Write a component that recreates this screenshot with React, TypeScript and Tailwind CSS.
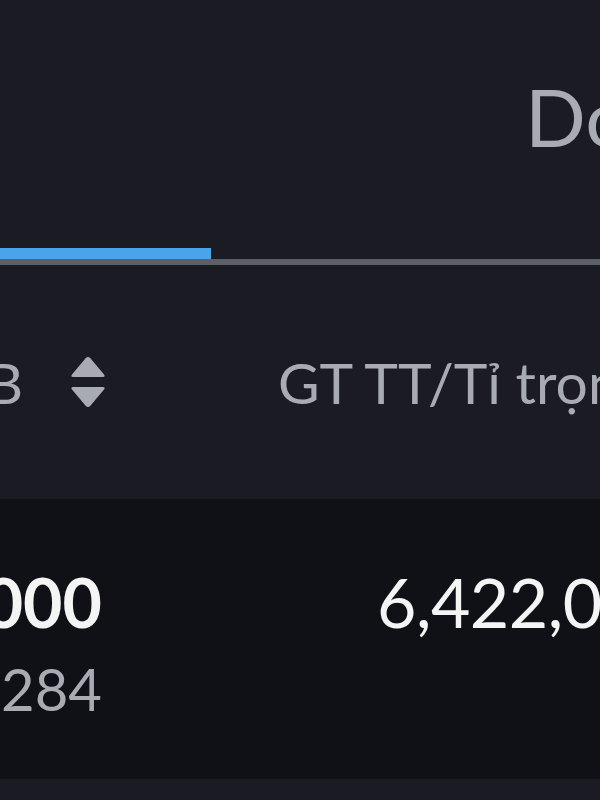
function SortIcon() {
  return (
    <svg width="36" height="52" viewBox="0 0 36 52" fill="#a9abb3">
      <path d="M15.6 2.2 Q18 -0.4 20.4 2.2 L34 18.6 Q35.6 21 33 21 L3 21 Q0.4 21 2 18.6 Z" />
      <path d="M15.6 49.8 Q18 52.4 20.4 49.8 L34 33.4 Q35.6 31 33 31 L3 31 Q0.4 31 2 33.4 Z" />
    </svg>
  );
}

export default function App() {
  return (
    <div className="flex h-[800px] w-[600px] flex-col overflow-hidden bg-[#1b1c23] font-['Lato',sans-serif]">
      {/* Tabs */}
      <div className="flex h-[248px] shrink-0 items-start pl-[525px] pt-[68px]">
        <span className="shrink-0 whitespace-nowrap text-[80px] leading-[96px] text-[#a9abb3]">Doanh nghiệp</span>
      </div>
      <div className="h-[11px] w-[211px] shrink-0 bg-[#4aa3eb]" />
      <div className="h-[6px] w-full shrink-0 bg-[#5c5f67]" />

      {/* Table header */}
      <div className="flex h-[234px] shrink-0 items-center">
        <div className="flex w-[23px] shrink-0 justify-end overflow-hidden">
          <span className="shrink-0 whitespace-nowrap text-[57px] leading-none text-[#a9abb3]">KL/Giá TB</span>
        </div>
        <div className="ml-[47px] flex shrink-0">
          <SortIcon />
        </div>
        <span className="ml-[172px] shrink-0 whitespace-nowrap text-[57px] leading-none text-[#a9abb3]">GT TT/Tỉ trọng</span>
      </div>

      {/* Row */}
      <div className="flex h-[280px] shrink-0 bg-[#101117]">
        <div className="flex w-[102px] shrink-0 flex-col items-end overflow-hidden pt-[63px]">
          <span className="shrink-0 whitespace-nowrap text-[68px] font-bold leading-[80px] text-[#f4f4f4]">1,000</span>
          <span className="mt-[15px] shrink-0 whitespace-nowrap text-[58px] leading-[64px] text-[#a9abb3]">24,284</span>
        </div>
        <div className="ml-[275px] shrink-0 pt-[63px]">
          <span className="whitespace-nowrap text-[68px] leading-[80px] tracking-[-0.5px] text-[#f4f4f4]">6,422,000</span>
        </div>
      </div>
      <div className="flex-1 bg-[#1b1c23]" />
    </div>
  );
}
